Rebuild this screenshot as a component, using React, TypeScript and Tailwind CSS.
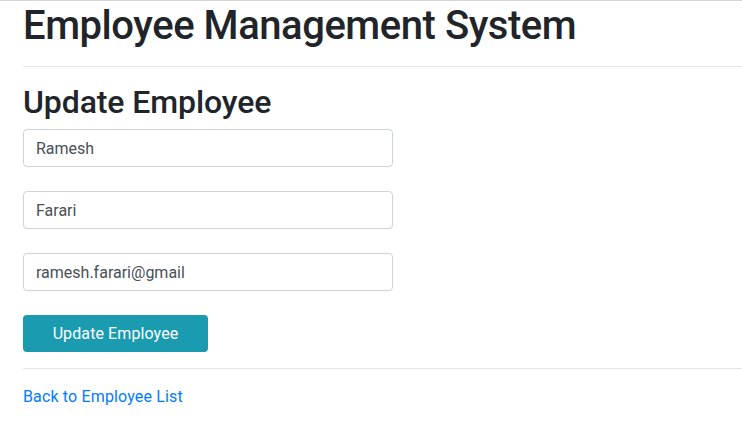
import React from "react"

const fields = [
  { name: "firstName", value: "Ramesh" },
  { name: "lastName", value: "Farari" },
  { name: "emailId", value: "ramesh.farari@gmail" },
]

export default function App() {
  return (
    <div
      className="min-h-screen bg-white border-t border-[#d6d6d6] text-[#212529]"
      style={{ fontFamily: "Roboto, 'Noto Sans', sans-serif" }}
    >
      <div className="pl-[23px]">
        {/* Header */}
        <h1 className="text-[40px] font-medium leading-[48px] tracking-[-0.45px] mt-px mb-2">
          Employee Management System
        </h1>
        <hr className="mt-4 mb-4 border-t border-[#e5e5e5]" />

        {/* Update form */}
        <h2 className="text-[32px] font-medium leading-[38px] tracking-[-0.1px] mb-2">Update Employee</h2>
        <form className="flex flex-col gap-6" onSubmit={(e) => e.preventDefault()}>
          {fields.map((f) => (
            <input
              key={f.name}
              name={f.name}
              defaultValue={f.value}
              className="w-[370px] h-[38px] px-3 border border-[#ced4da] rounded-[4px] text-base text-[#495057] outline-none"
            />
          ))}
          <button
            type="submit"
            className="w-[185px] h-[37px] bg-[#1a9bb0] text-white text-base tracking-[0.1px] rounded-[4px]"
          >
            Update Employee
          </button>
        </form>
        <hr className="mt-4 mb-4 border-t border-[#e5e5e5]" />
        <a href="#" className="text-[#007bff] text-base tracking-[0.15px]">
          Back to Employee List
        </a>
      </div>
    </div>
  )
}
